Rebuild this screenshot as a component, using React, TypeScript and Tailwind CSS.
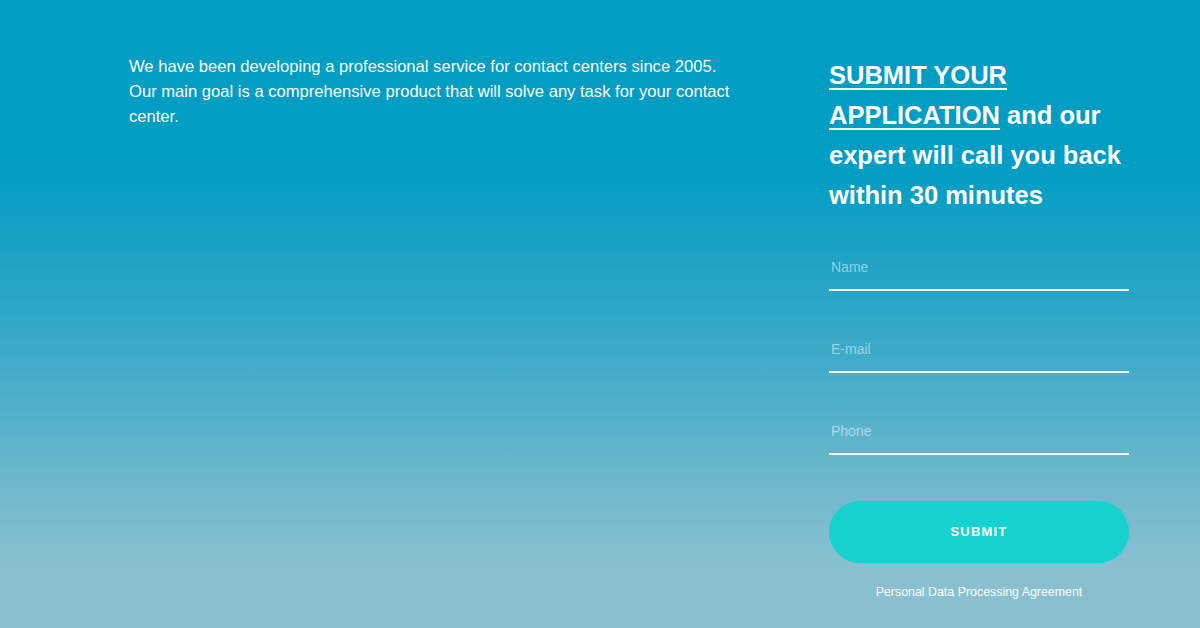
export default function App() {
  return (
    <div
      className="w-[1200px] h-[628px] overflow-hidden bg-[linear-gradient(180deg,#019dc3_0%,#019dc3_26%,#2ea7c7_50%,#62b5cb_72%,#88c0d0_90%,#89c1d1_100%)] text-white"
      style={{ fontFamily: '"Liberation Sans", Arial, sans-serif' }}
    >
      <div className="flex justify-between pl-[129px] pr-[71px] pt-[54px]">
        {/* About */}
        <div className="w-[620px] text-[16.6px] leading-[25px]">
          <p>We have been developing a professional service for contact centers since 2005.</p>
          <p>Our main goal is a comprehensive product that will solve any task for your contact center.</p>
        </div>

        {/* Application form */}
        <div className="w-[300px] flex flex-col">
          <h2 className="mt-[1px] text-[25.5px] leading-[40px] font-bold">
            <a href="#" className="underline underline-offset-[4px] decoration-2">SUBMIT YOUR APPLICATION</a>{" "}
            and our expert will call you back within 30 minutes
          </h2>

          <form className="mt-[28px] flex flex-col gap-[34px]">
            {["Name", "E-mail", "Phone"].map((p) => (
              <input
                key={p}
                placeholder={p}
                className="h-[48px] w-full bg-transparent border-b-2 border-white px-[2px] pt-[2px] text-[14px] text-white placeholder:text-white/50 outline-none"
              />
            ))}
            <button
              type="button"
              className="mt-[12px] h-[62px] w-full rounded-full bg-[#17d1cf] text-[13px] font-bold tracking-[1.2px] text-white"
            >
              SUBMIT
            </button>
          </form>

          <a href="#" className="mt-[22px] text-center text-[12.4px] leading-[14px]">
            Personal Data Processing Agreement
          </a>
        </div>
      </div>
    </div>
  );
}
